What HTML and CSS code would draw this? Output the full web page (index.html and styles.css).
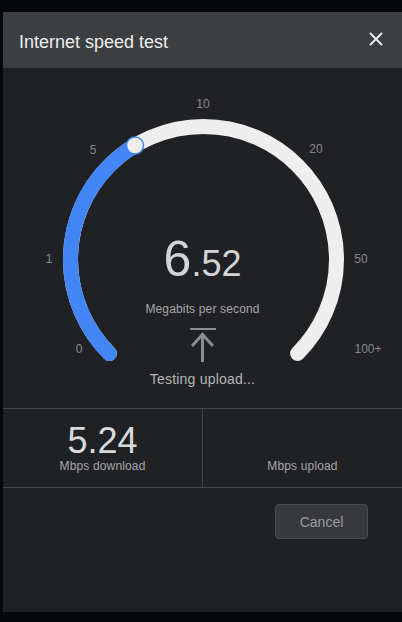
FILE: index.html
```html
<!DOCTYPE html>
<html lang="en">
<head>
    <meta charset="UTF-8">
    <meta name="viewport" content="width=device-width, initial-scale=1.0">
    <title>Internet speed test</title>
    <link rel="stylesheet" href="styles.css">
</head>
<body>

    <div class="dialog">
        <div class="dialog-header">
            <h1>Internet speed test</h1>
            <button class="close-button" aria-label="Close">
                <svg width="14" height="14" viewBox="0 0 14 14">
                    <path d="M1 1 L13 13 M13 1 L1 13" stroke="#e8eaed" stroke-width="2" fill="none"/>
                </svg>
            </button>
        </div>

        <div class="gauge">
            <svg class="gauge-dial" width="399" height="340" viewBox="0 0 399 340">
                <path d="M106.45 285.55 A133 133 0 1 1 294.55 285.55" stroke="#eeeeee" stroke-width="15" stroke-linecap="round" fill="none"/>
                <path d="M106.45 285.55 A133 133 0 0 1 132 77.5" stroke="#4285f4" stroke-width="15" stroke-linecap="round" fill="none"/>
                <circle cx="132" cy="77.5" r="8.5" fill="#eeeeee" stroke="#4285f4" stroke-width="1.5"/>
                <g class="gauge-labels">
                    <text x="76" y="281">0</text>
                    <text x="46" y="191">1</text>
                    <text x="90" y="82">5</text>
                    <text x="200" y="36">10</text>
                    <text x="313" y="81">20</text>
                    <text x="358" y="191">50</text>
                    <text x="365" y="281">100+</text>
                </g>
            </svg>

            <div class="readout">
                <div class="speed"><span class="speed-int">6</span><span class="speed-frac">.52</span></div>
                <div class="speed-unit">Megabits per second</div>
                <svg class="upload-icon" width="28" height="36" viewBox="0 0 28 36">
                    <rect x="1" y="1" width="26" height="2" fill="#8a8d91"/>
                    <path d="M13.5 6 V35" stroke="#8a8d91" stroke-width="3" fill="none"/>
                    <path d="M3 19 L13.5 7.5 L24 19" stroke="#8a8d91" stroke-width="3" fill="none"/>
                </svg>
                <div class="status">Testing upload...</div>
            </div>
        </div>

        <div class="results">
            <div class="result">
                <div class="result-value">5.24</div>
                <div class="result-label">Mbps download</div>
            </div>
            <div class="result">
                <div class="result-value"></div>
                <div class="result-label">Mbps upload</div>
            </div>
        </div>

        <div class="dialog-footer">
            <button class="cancel-button">Cancel</button>
        </div>
    </div>

</body>
</html>
```

FILE: styles.css
```css
/* Base styles */
* {
    margin: 0;
    padding: 0;
    box-sizing: border-box;
}

body {
    font-family: 'Liberation Sans', Arial, sans-serif;
    background-color: #070809;
    width: 402px;
    height: 622px;
    overflow: hidden;
}

.dialog {
    margin: 12px 0 0 3px;
    width: 399px;
    height: 600px;
    background-color: #202124;
}

/* Header */
.dialog-header {
    height: 56px;
    padding: 0 19px 0 16px;
    background-color: #3c3f42;
    display: flex;
    justify-content: space-between;
    align-items: center;
}

.dialog-header h1 {
    font-size: 18px;
    font-weight: normal;
    color: #eceef0;
    margin-top: 5px;
}

.close-button {
    background: none;
    border: none;
    display: flex;
    margin-top: -3px;
    cursor: pointer;
}

/* Gauge */
.gauge {
    position: relative;
    height: 340px;
}

.gauge-dial {
    position: absolute;
    top: 0;
    left: 0;
}

.gauge-labels text {
    font-family: 'Liberation Sans', Arial, sans-serif;
    font-size: 12px;
    fill: #858a8f;
    text-anchor: middle;
    dominant-baseline: central;
}

.readout {
    position: relative;
    padding-top: 166px;
    display: flex;
    flex-direction: column;
    align-items: center;
}

.speed {
    height: 50px;
    line-height: 50px;
    color: #d2d4d7;
}

.speed-int {
    font-size: 50px;
}

.speed-frac {
    font-size: 36px;
}

.speed-unit {
    margin-top: 17px;
    font-size: 12px;
    line-height: 16px;
    letter-spacing: 0.15px;
    color: #a3a7ab;
}

.upload-icon {
    margin-top: 10px;
}

.status {
    margin-top: 7px;
    font-size: 14px;
    line-height: 18px;
    letter-spacing: 0.2px;
    color: #b3b6ba;
}

/* Results */
.results {
    display: grid;
    grid-template-columns: 199px 1fr;
    height: 80px;
    border-top: 1px solid #45484c;
    border-bottom: 1px solid #45484c;
}

.result {
    display: flex;
    flex-direction: column;
    align-items: center;
    padding-top: 14px;
}

.result + .result {
    border-left: 1px solid #45484c;
}

.result-value {
    height: 36px;
    font-size: 36px;
    line-height: 36px;
    color: #d8dadd;
}

.result-label {
    font-size: 12px;
    line-height: 14px;
    letter-spacing: 0.15px;
    color: #a3a7ab;
}

/* Footer */
.dialog-footer {
    display: flex;
    justify-content: flex-end;
    padding: 16px 34px 0 0;
}

.cancel-button {
    width: 93px;
    height: 35px;
    font-family: 'Liberation Sans', Arial, sans-serif;
    font-size: 14px;
    color: #9a9ea3;
    background-color: #38393c;
    border: 1px solid #4a4c50;
    border-radius: 4px;
    cursor: pointer;
}
```
